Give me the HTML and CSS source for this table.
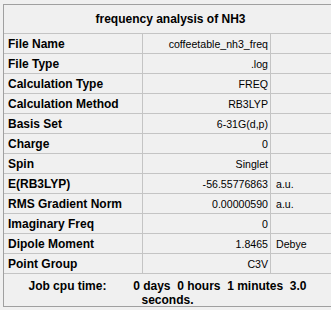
FILE: index.html
```html
<!DOCTYPE html>
<html lang="en">
<head>
<meta charset="utf-8">
<title>frequency analysis of NH3</title>
<link rel="stylesheet" href="styles.css">
</head>
<body>
<div class="summary">
  <div class="summary-title">frequency analysis of NH3</div>
  <div class="row"><div class="label">File Name</div><div class="value">coffeetable_nh3_freq</div><div class="unit"></div></div>
  <div class="row"><div class="label">File Type</div><div class="value">.log</div><div class="unit"></div></div>
  <div class="row"><div class="label">Calculation Type</div><div class="value">FREQ</div><div class="unit"></div></div>
  <div class="row"><div class="label">Calculation Method</div><div class="value">RB3LYP</div><div class="unit"></div></div>
  <div class="row"><div class="label">Basis Set</div><div class="value">6-31G(d,p)</div><div class="unit"></div></div>
  <div class="row"><div class="label">Charge</div><div class="value">0</div><div class="unit"></div></div>
  <div class="row"><div class="label">Spin</div><div class="value">Singlet</div><div class="unit"></div></div>
  <div class="row"><div class="label">E(RB3LYP)</div><div class="value">-56.55776863</div><div class="unit">a.u.</div></div>
  <div class="row"><div class="label">RMS Gradient Norm</div><div class="value">0.00000590</div><div class="unit">a.u.</div></div>
  <div class="row"><div class="label">Imaginary Freq</div><div class="value">0</div><div class="unit"></div></div>
  <div class="row"><div class="label">Dipole Moment</div><div class="value">1.8465</div><div class="unit">Debye</div></div>
  <div class="row"><div class="label">Point Group</div><div class="value">C3V</div><div class="unit"></div></div>
  <div class="cpu-time">Job cpu time:        0 days  0 hours  1 minutes  3.0
seconds.</div>
</div>
</body>
</html>
```

FILE: styles.css
```css
html, body {
  margin: 0;
  padding: 0;
  background: #f0f0f0;
  overflow: hidden;
}

body {
  font-family: "Liberation Sans", Arial, sans-serif;
  color: #000;
}

.summary {
  margin: 4px 0 0 3px;
  width: 333px;
  border-left: 1px solid #a0a0a0;
  border-top: 1px solid #a0a0a0;
  border-bottom: 1px solid #a0a0a0;
  background: #f0f0f0;
}

.summary-title {
  height: 28px;
  border-bottom: 1px solid #c4c4c4;
  display: flex;
  align-items: center;
  justify-content: center;
  font-weight: bold;
  font-size: 12px;
}

.row {
  display: grid;
  grid-template-columns: 139px 128px 1fr;
  height: 20px;
  box-sizing: border-box;
  border-bottom: 1px solid #c4c4c4;
}

.row > div {
  display: flex;
  align-items: center;
  white-space: nowrap;
}

.label {
  border-right: 1px solid #c4c4c4;
  padding-left: 4px;
  font-weight: bold;
  font-size: 12px;
}

.value {
  border-right: 1px solid #c4c4c4;
  justify-content: flex-end;
  padding-right: 2px;
  font-size: 10.6px;
}

.unit {
  padding-left: 5px;
  font-size: 10.6px;
}

.cpu-time {
  height: 32px;
  box-sizing: border-box;
  padding: 5px 6px 0 0;
  font-weight: bold;
  font-size: 12px;
  line-height: 14px;
  text-align: center;
  white-space: pre;
}
```
